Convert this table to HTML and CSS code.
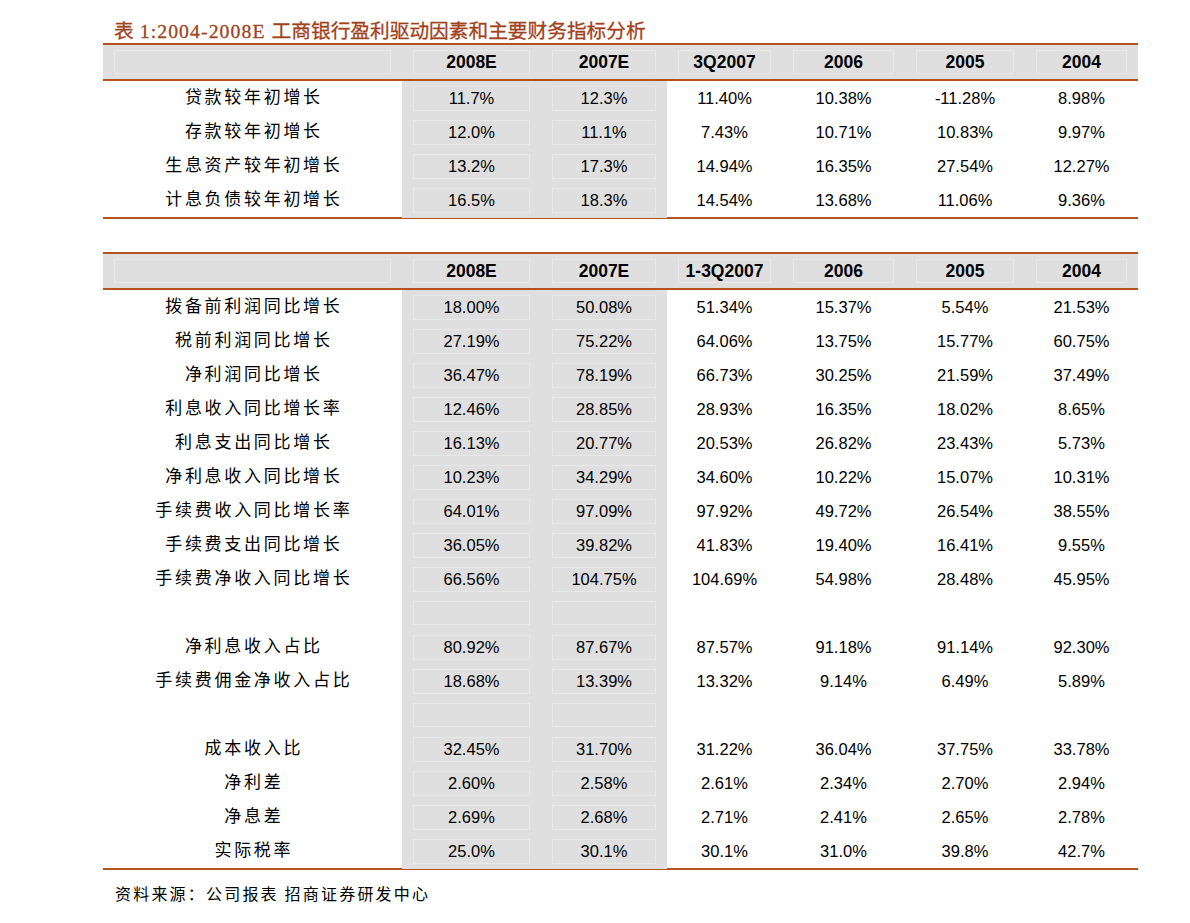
FILE: index.html
```html
<!DOCTYPE html>
<html lang="zh-CN">
<head>
<meta charset="utf-8">
<title>工商银行盈利驱动因素和主要财务指标分析</title>
<link rel="stylesheet" href="styles.css">
</head>
<body>
<div class="page">
  <div class="title"><span>表</span><span class="t-asc"> 1:2004-2008E </span><span>工商银行盈利驱动因素和主要财务指标分析</span></div>

  <div class="tbl first">
    <div class="row head">
      <div class="c"><div class="box"></div></div>
      <div class="c"><div class="box">2008E</div></div>
      <div class="c"><div class="box">2007E</div></div>
      <div class="c"><div class="box">3Q2007</div></div>
      <div class="c"><div class="box">2006</div></div>
      <div class="c"><div class="box">2005</div></div>
      <div class="c"><div class="box">2004</div></div>
    </div>
    <div class="row">
      <div class="c lab">贷款较年初增长</div>
      <div class="c g"><div class="box">11.7%</div></div>
      <div class="c g"><div class="box">12.3%</div></div>
      <div class="c"><div class="box">11.40%</div></div>
      <div class="c"><div class="box">10.38%</div></div>
      <div class="c"><div class="box">-11.28%</div></div>
      <div class="c"><div class="box">8.98%</div></div>
    </div>
    <div class="row">
      <div class="c lab">存款较年初增长</div>
      <div class="c g"><div class="box">12.0%</div></div>
      <div class="c g"><div class="box">11.1%</div></div>
      <div class="c"><div class="box">7.43%</div></div>
      <div class="c"><div class="box">10.71%</div></div>
      <div class="c"><div class="box">10.83%</div></div>
      <div class="c"><div class="box">9.97%</div></div>
    </div>
    <div class="row">
      <div class="c lab">生息资产较年初增长</div>
      <div class="c g"><div class="box">13.2%</div></div>
      <div class="c g"><div class="box">17.3%</div></div>
      <div class="c"><div class="box">14.94%</div></div>
      <div class="c"><div class="box">16.35%</div></div>
      <div class="c"><div class="box">27.54%</div></div>
      <div class="c"><div class="box">12.27%</div></div>
    </div>
    <div class="row">
      <div class="c lab">计息负债较年初增长</div>
      <div class="c g"><div class="box">16.5%</div></div>
      <div class="c g"><div class="box">18.3%</div></div>
      <div class="c"><div class="box">14.54%</div></div>
      <div class="c"><div class="box">13.68%</div></div>
      <div class="c"><div class="box">11.06%</div></div>
      <div class="c"><div class="box">9.36%</div></div>
    </div>
  </div>

  <div class="tbl">
    <div class="row head">
      <div class="c"><div class="box"></div></div>
      <div class="c"><div class="box">2008E</div></div>
      <div class="c"><div class="box">2007E</div></div>
      <div class="c"><div class="box">1-3Q2007</div></div>
      <div class="c"><div class="box">2006</div></div>
      <div class="c"><div class="box">2005</div></div>
      <div class="c"><div class="box">2004</div></div>
    </div>
    <div class="row">
      <div class="c lab">拨备前利润同比增长</div>
      <div class="c g"><div class="box">18.00%</div></div>
      <div class="c g"><div class="box">50.08%</div></div>
      <div class="c"><div class="box">51.34%</div></div>
      <div class="c"><div class="box">15.37%</div></div>
      <div class="c"><div class="box">5.54%</div></div>
      <div class="c"><div class="box">21.53%</div></div>
    </div>
    <div class="row">
      <div class="c lab">税前利润同比增长</div>
      <div class="c g"><div class="box">27.19%</div></div>
      <div class="c g"><div class="box">75.22%</div></div>
      <div class="c"><div class="box">64.06%</div></div>
      <div class="c"><div class="box">13.75%</div></div>
      <div class="c"><div class="box">15.77%</div></div>
      <div class="c"><div class="box">60.75%</div></div>
    </div>
    <div class="row">
      <div class="c lab">净利润同比增长</div>
      <div class="c g"><div class="box">36.47%</div></div>
      <div class="c g"><div class="box">78.19%</div></div>
      <div class="c"><div class="box">66.73%</div></div>
      <div class="c"><div class="box">30.25%</div></div>
      <div class="c"><div class="box">21.59%</div></div>
      <div class="c"><div class="box">37.49%</div></div>
    </div>
    <div class="row">
      <div class="c lab">利息收入同比增长率</div>
      <div class="c g"><div class="box">12.46%</div></div>
      <div class="c g"><div class="box">28.85%</div></div>
      <div class="c"><div class="box">28.93%</div></div>
      <div class="c"><div class="box">16.35%</div></div>
      <div class="c"><div class="box">18.02%</div></div>
      <div class="c"><div class="box">8.65%</div></div>
    </div>
    <div class="row">
      <div class="c lab">利息支出同比增长</div>
      <div class="c g"><div class="box">16.13%</div></div>
      <div class="c g"><div class="box">20.77%</div></div>
      <div class="c"><div class="box">20.53%</div></div>
      <div class="c"><div class="box">26.82%</div></div>
      <div class="c"><div class="box">23.43%</div></div>
      <div class="c"><div class="box">5.73%</div></div>
    </div>
    <div class="row">
      <div class="c lab">净利息收入同比增长</div>
      <div class="c g"><div class="box">10.23%</div></div>
      <div class="c g"><div class="box">34.29%</div></div>
      <div class="c"><div class="box">34.60%</div></div>
      <div class="c"><div class="box">10.22%</div></div>
      <div class="c"><div class="box">15.07%</div></div>
      <div class="c"><div class="box">10.31%</div></div>
    </div>
    <div class="row">
      <div class="c lab">手续费收入同比增长率</div>
      <div class="c g"><div class="box">64.01%</div></div>
      <div class="c g"><div class="box">97.09%</div></div>
      <div class="c"><div class="box">97.92%</div></div>
      <div class="c"><div class="box">49.72%</div></div>
      <div class="c"><div class="box">26.54%</div></div>
      <div class="c"><div class="box">38.55%</div></div>
    </div>
    <div class="row">
      <div class="c lab">手续费支出同比增长</div>
      <div class="c g"><div class="box">36.05%</div></div>
      <div class="c g"><div class="box">39.82%</div></div>
      <div class="c"><div class="box">41.83%</div></div>
      <div class="c"><div class="box">19.40%</div></div>
      <div class="c"><div class="box">16.41%</div></div>
      <div class="c"><div class="box">9.55%</div></div>
    </div>
    <div class="row">
      <div class="c lab">手续费净收入同比增长</div>
      <div class="c g"><div class="box">66.56%</div></div>
      <div class="c g"><div class="box">104.75%</div></div>
      <div class="c"><div class="box">104.69%</div></div>
      <div class="c"><div class="box">54.98%</div></div>
      <div class="c"><div class="box">28.48%</div></div>
      <div class="c"><div class="box">45.95%</div></div>
    </div>
    <div class="row">
      <div class="c lab"></div>
      <div class="c g"><div class="box"></div></div>
      <div class="c g"><div class="box"></div></div>
      <div class="c"></div>
      <div class="c"></div>
      <div class="c"></div>
      <div class="c"></div>
    </div>
    <div class="row">
      <div class="c lab">净利息收入占比</div>
      <div class="c g"><div class="box">80.92%</div></div>
      <div class="c g"><div class="box">87.67%</div></div>
      <div class="c"><div class="box">87.57%</div></div>
      <div class="c"><div class="box">91.18%</div></div>
      <div class="c"><div class="box">91.14%</div></div>
      <div class="c"><div class="box">92.30%</div></div>
    </div>
    <div class="row">
      <div class="c lab">手续费佣金净收入占比</div>
      <div class="c g"><div class="box">18.68%</div></div>
      <div class="c g"><div class="box">13.39%</div></div>
      <div class="c"><div class="box">13.32%</div></div>
      <div class="c"><div class="box">9.14%</div></div>
      <div class="c"><div class="box">6.49%</div></div>
      <div class="c"><div class="box">5.89%</div></div>
    </div>
    <div class="row">
      <div class="c lab"></div>
      <div class="c g"><div class="box"></div></div>
      <div class="c g"><div class="box"></div></div>
      <div class="c"></div>
      <div class="c"></div>
      <div class="c"></div>
      <div class="c"></div>
    </div>
    <div class="row">
      <div class="c lab">成本收入比</div>
      <div class="c g"><div class="box">32.45%</div></div>
      <div class="c g"><div class="box">31.70%</div></div>
      <div class="c"><div class="box">31.22%</div></div>
      <div class="c"><div class="box">36.04%</div></div>
      <div class="c"><div class="box">37.75%</div></div>
      <div class="c"><div class="box">33.78%</div></div>
    </div>
    <div class="row">
      <div class="c lab">净利差</div>
      <div class="c g"><div class="box">2.60%</div></div>
      <div class="c g"><div class="box">2.58%</div></div>
      <div class="c"><div class="box">2.61%</div></div>
      <div class="c"><div class="box">2.34%</div></div>
      <div class="c"><div class="box">2.70%</div></div>
      <div class="c"><div class="box">2.94%</div></div>
    </div>
    <div class="row">
      <div class="c lab">净息差</div>
      <div class="c g"><div class="box">2.69%</div></div>
      <div class="c g"><div class="box">2.68%</div></div>
      <div class="c"><div class="box">2.71%</div></div>
      <div class="c"><div class="box">2.41%</div></div>
      <div class="c"><div class="box">2.65%</div></div>
      <div class="c"><div class="box">2.78%</div></div>
    </div>
    <div class="row">
      <div class="c lab">实际税率</div>
      <div class="c g"><div class="box">25.0%</div></div>
      <div class="c g"><div class="box">30.1%</div></div>
      <div class="c"><div class="box">30.1%</div></div>
      <div class="c"><div class="box">31.0%</div></div>
      <div class="c"><div class="box">39.8%</div></div>
      <div class="c"><div class="box">42.7%</div></div>
    </div>
  </div>

  <div class="source">资料来源：公司报表 招商证券研发中心</div>
</div>
</body>
</html>
```

FILE: styles.css
```css
html, body {
  margin: 0;
  padding: 0;
  background: #ffffff;
}

.page {
  width: 1035px;
  margin-left: 103px;
  font-family: "Liberation Sans", Arial, sans-serif;
  color: #000;
}

.title {
  height: 43px;
  box-sizing: border-box;
  padding: 18px 0 0 11px;
  line-height: 24px;
  font-size: 19.7px;
  color: #a2421b;
  font-family: "Noto Sans CJK SC", sans-serif;
  white-space: pre;
  -webkit-text-stroke: 0.3px #a2421b;
}

.t-asc {
  font-family: "Liberation Serif", serif;
  letter-spacing: 1.1px;
}

.tbl {
  border-top: 2px solid #b5521f;
  border-bottom: 2px solid #b5521f;
}

.tbl.first {
  margin-bottom: 33px;
}

.row {
  display: grid;
  grid-template-columns: 299px 139px 126px 115px 123px 120px 113px;
  height: 34px;
}

.head {
  background: #dfdfdf;
  border-bottom: 2px solid #b5521f;
  font-weight: bold;
  font-size: 17.5px;
}

.c {
  display: flex;
  box-sizing: border-box;
  padding: 5px 11px;
  font-size: 16.5px;
}

.head .c {
  font-size: 17.5px;
}

.box {
  flex: 1;
  display: flex;
  align-items: center;
  justify-content: center;
  border: 1px solid transparent;
  white-space: nowrap;
}

.head .box,
.g .box {
  border-color: #e8e8e8;
}

.g {
  background: #dfdfdf;
}

.lab {
  align-items: center;
  justify-content: center;
  padding: 2px 11px 8px 13.7px;
  font-family: "Noto Sans CJK SC", sans-serif;
  font-size: 17px;
  letter-spacing: 2.7px;
  white-space: nowrap;
}

.source {
  margin-top: 13px;
  padding-left: 12px;
  line-height: 20px;
  font-family: "Noto Sans CJK SC", sans-serif;
  font-size: 16px;
  letter-spacing: 2.2px;
}
```
